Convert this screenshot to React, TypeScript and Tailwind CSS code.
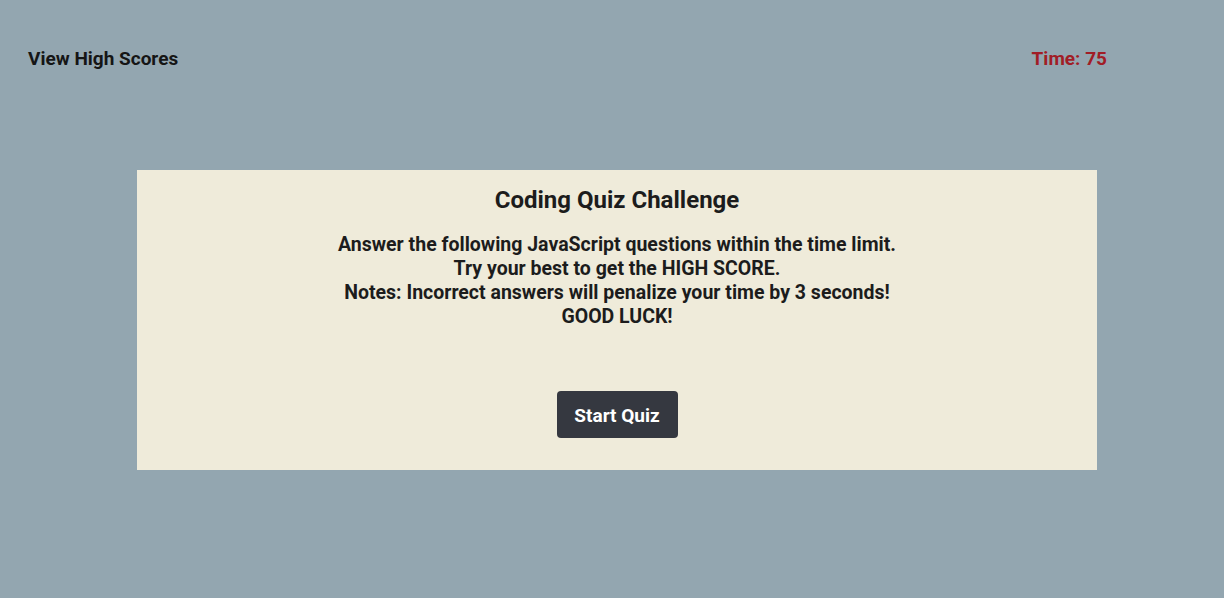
export default function App() {
  return (
    <div className="min-h-[598px] w-full bg-[#93a6b0] text-[#1c1c1c]" style={{ fontFamily: '"Roboto", "Liberation Sans", sans-serif' }}>
      <header className="flex items-center justify-between pl-[28px] pr-[117px] pt-[48px] h-[70px]">
        <a className="text-[19px] font-bold leading-[24px] text-[#151515]">View High Scores</a>
        <div className="text-[19px] font-bold leading-[24px] text-[#a11d26]">Time: 75</div>
      </header>
      <main className="mt-[100px] ml-[137px] w-[960px] h-[300px] bg-[#efebda] flex flex-col items-center">
        <h1 className="mt-[16px] text-[24px] font-bold leading-[28px]">Coding Quiz Challenge</h1>
        <p className="mt-[19px] text-[19.5px] font-bold leading-[24px] text-center">
          Answer the following JavaScript questions within the time limit.<br />
          Try your best to get the HIGH SCORE.<br />
          Notes: Incorrect answers will penalize your time by 3 seconds!<br />
          GOOD LUCK!
        </p>
        <button className="mt-[62px] w-[121px] h-[47px] pt-[3px] rounded-[4px] bg-[#353840] text-white text-[19px] font-bold">Start Quiz</button>
      </main>
    </div>
  );
}
